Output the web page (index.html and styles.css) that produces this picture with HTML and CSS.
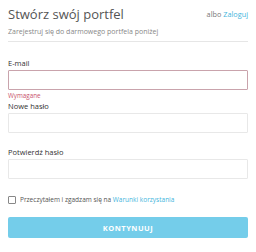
FILE: index.html
```html
<!DOCTYPE html>
<html lang="pl">

<head>
    <meta charset="UTF-8" />
    <meta name="viewport" content="width=device-width, initial-scale=1.0" />
    <title>Stwórz swój portfel</title>
    <link rel="stylesheet" href="styles.css">
</head>

<body>
    <div class="signup">
        <div class="header">
            <h1>Stwórz swój portfel</h1>
            <div class="login-hint">albo <a href="#">Zaloguj</a></div>
        </div>
        <p class="subtitle">Zarejestruj się do darmowego portfela poniżej</p>

        <form class="form">
            <div class="field has-error">
                <label>E-mail</label>
                <input type="text" class="invalid" />
                <div class="error">Wymagane</div>
            </div>
            <div class="field">
                <label>Nowe hasło</label>
                <input type="password" />
            </div>
            <div class="field">
                <label>Potwierdź hasło</label>
                <input type="password" />
            </div>

            <label class="terms">
                <span class="checkbox"></span>
                <span>Przeczytałem i zgadzam się na <a href="#">Warunki korzystania</a></span>
            </label>

            <button type="button" class="submit">KONTYNUUJ</button>
        </form>
    </div>
</body>

</html>
```

FILE: styles.css
```css
body {
    font-family: "Open Sans", sans-serif;
    margin: 0;
    background-color: white;
    color: #444;
}

.signup {
    padding: 5px 8px 0 8px;
}

.header {
    display: flex;
    justify-content: space-between;
    align-items: center;
}

h1 {
    font-size: 13px;
    font-weight: 400;
    color: #555;
    margin: 0;
    line-height: 18px;
}

.login-hint {
    font-size: 7.3px;
    color: #777;
}

a {
    color: #3fb5dc;
    text-decoration: none;
}

.subtitle {
    font-size: 7px;
    line-height: 10px;
    color: #888;
    margin: 4px 0 0 0;
    padding-bottom: 4px;
    border-bottom: 1px solid #e6e6e6;
}

.form {
    display: flex;
    flex-direction: column;
    margin-top: 16px;
}

.field {
    display: flex;
    flex-direction: column;
    margin-bottom: 14px;
}

.field.has-error {
    margin-bottom: 1px;
}

.field label {
    font-size: 7.5px;
    line-height: 10px;
    color: #333;
    margin-bottom: 2px;
}

.field input {
    height: 20px;
    box-sizing: border-box;
    border: 1px solid #e8e8e8;
    border-radius: 1px;
    padding: 0 4px;
    margin: 0;
}

.field input.invalid {
    border-color: #c9a3ac;
}

.error {
    font-size: 6.3px;
    line-height: 8px;
    color: #c9546c;
    margin-top: 2px;
}

.terms {
    display: flex;
    align-items: center;
    gap: 4px;
    font-size: 6.5px;
    line-height: 9px;
    color: #555;
    margin-top: 2px;
}

.checkbox {
    width: 6px;
    height: 6px;
    border: 1px solid #888;
    border-radius: 1px;
}

.submit {
    margin-top: 13px;
    height: 21px;
    border: none;
    border-radius: 2px;
    background-color: #74cdea;
    color: white;
    font-family: "Open Sans", sans-serif;
    font-weight: bold;
    font-size: 7.5px;
    letter-spacing: 0.5px;
}
```
